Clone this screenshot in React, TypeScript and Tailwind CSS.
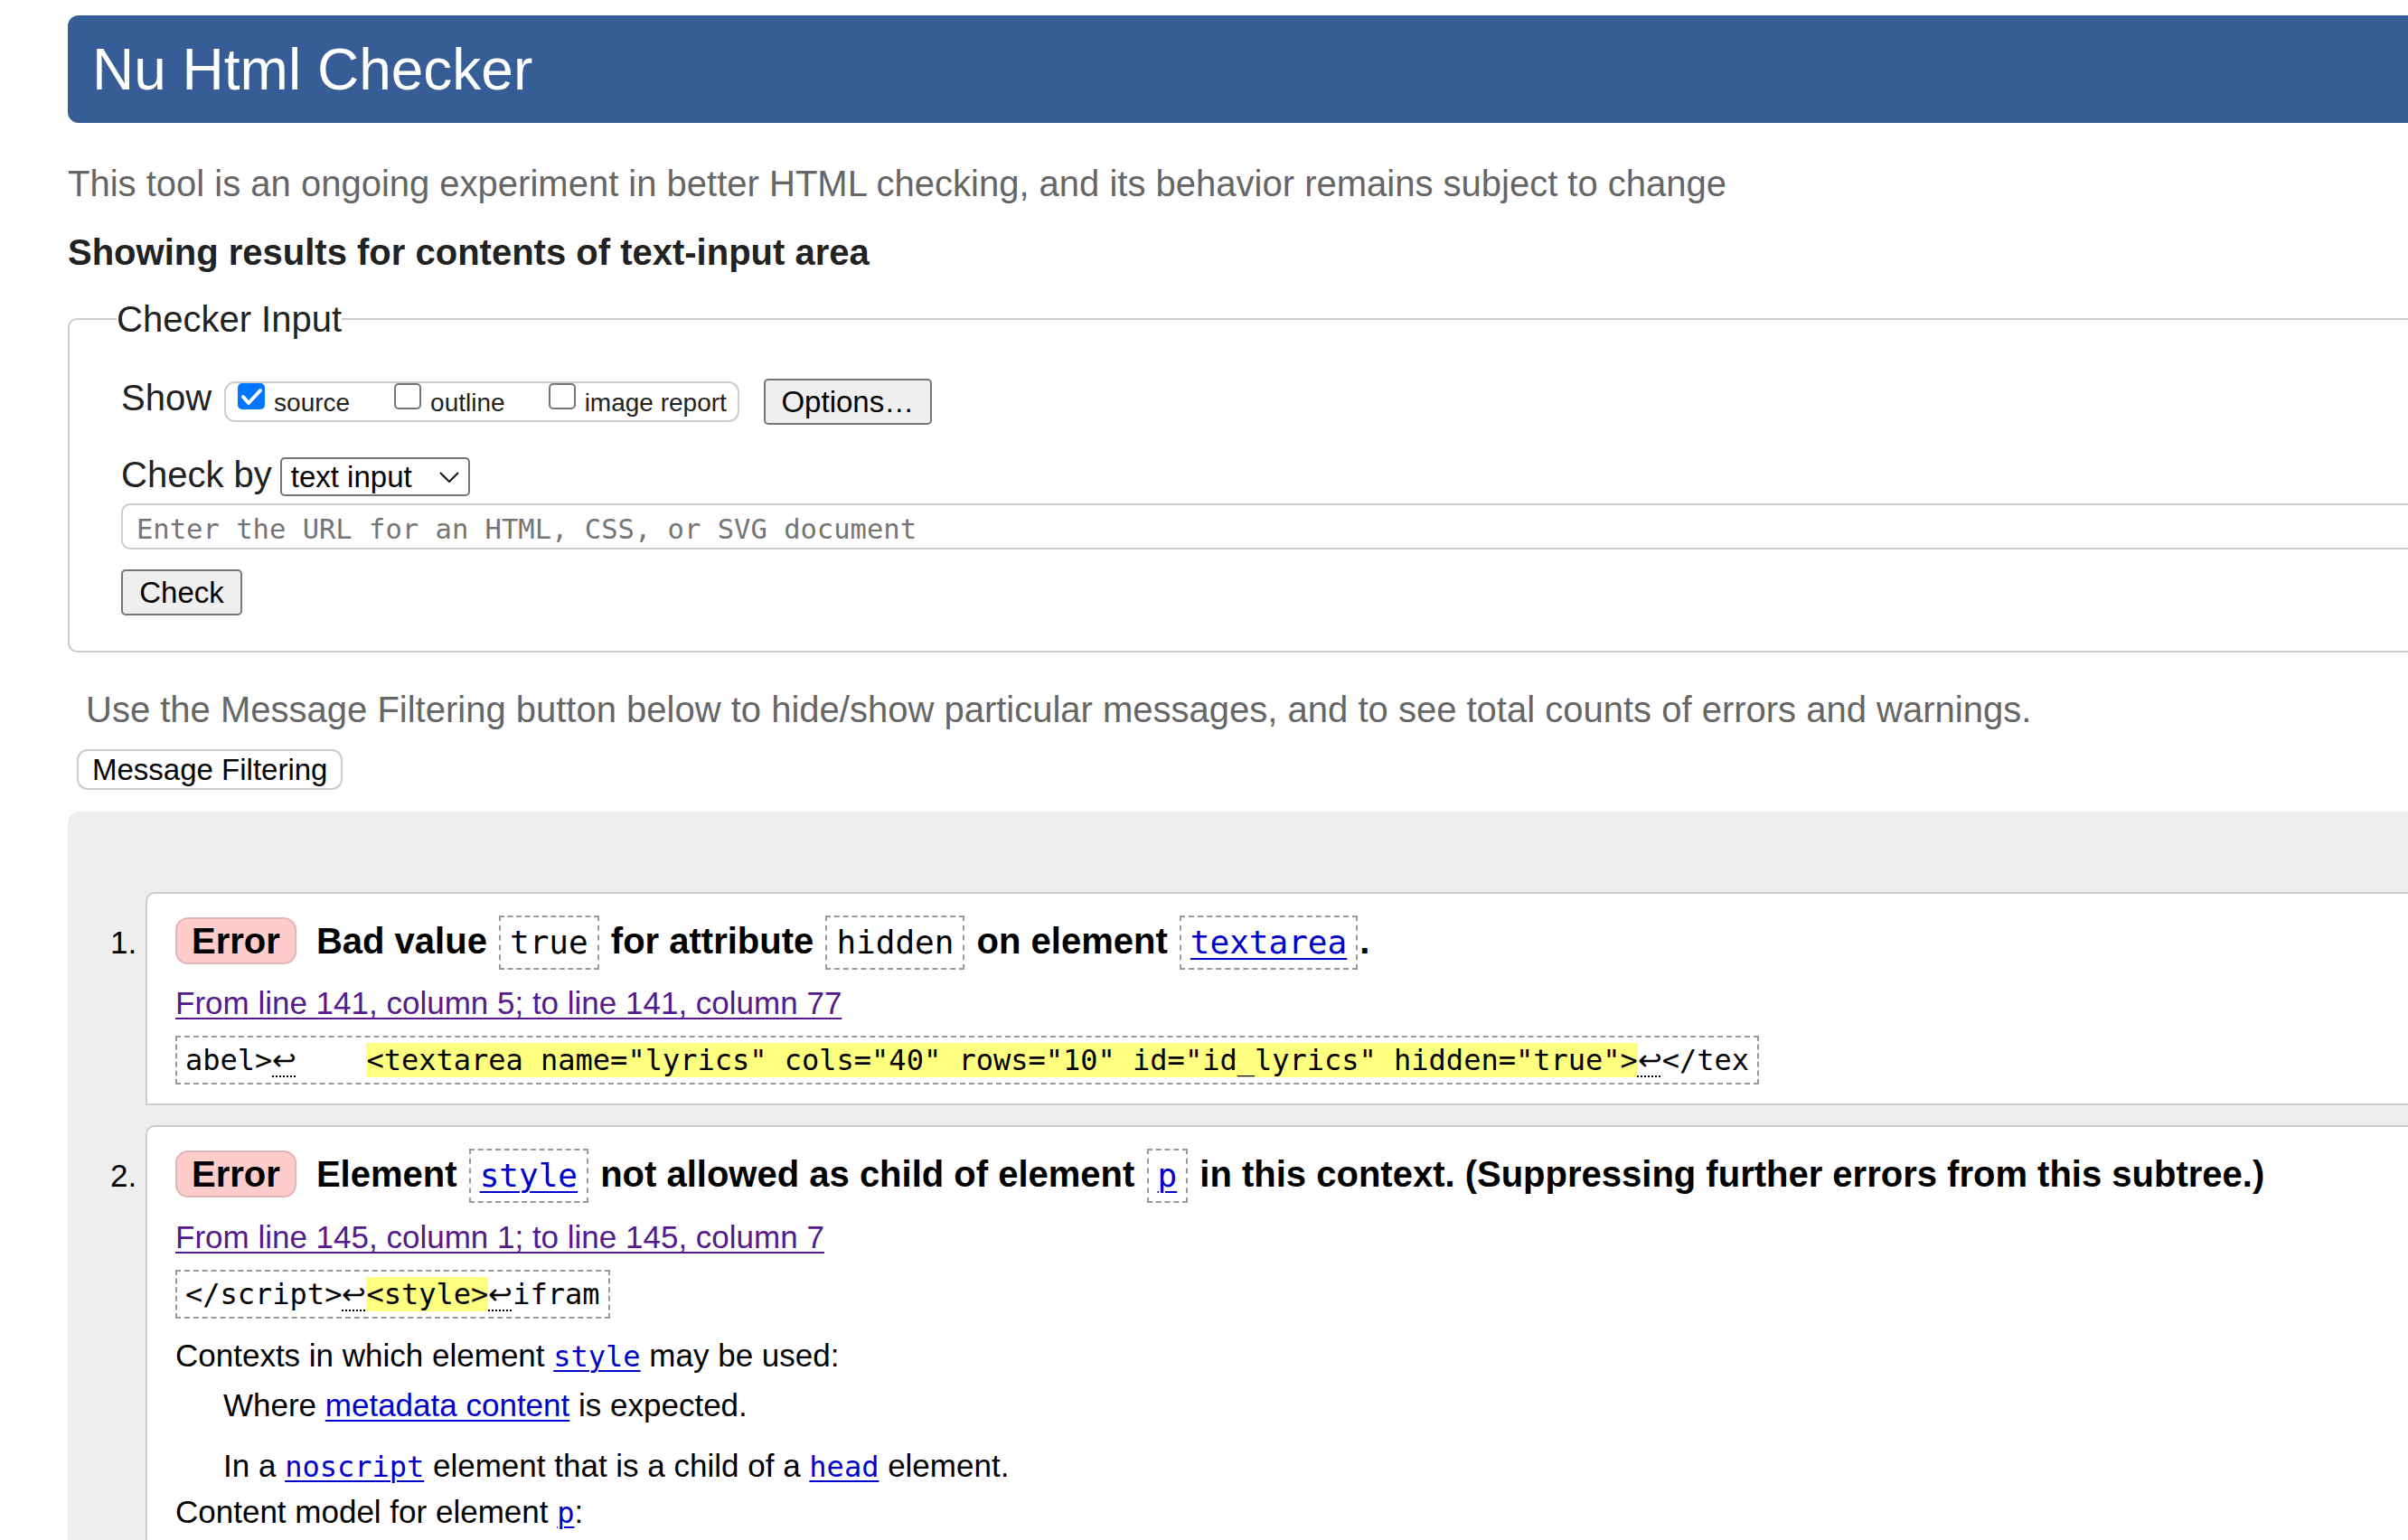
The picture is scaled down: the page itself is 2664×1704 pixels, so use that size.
import React from "react";

const MONO = "font-['DejaVu_Sans_Mono',monospace]";

function Lf() {
  return (
    <span className="font-['DejaVu_Sans',sans-serif] font-light underline decoration-dotted decoration-[1.5px] underline-offset-[6px]">↩</span>
  );
}

function CodeBox({ children }: { children: React.ReactNode }) {
  return (
    <code className="mx-[2px] inline-block border-2 border-dashed border-[#999] px-[10px] font-['DejaVu_Sans_Mono',monospace] text-[36px] font-normal leading-[56px]">
      {children}
    </code>
  );
}

function CodeLink({ children }: { children: React.ReactNode }) {
  return <a className="text-[#0000cc] underline decoration-[2px] underline-offset-[5px]">{children}</a>;
}

function Badge() {
  return (
    <span className="mr-[11px] inline-block rounded-[14px] border-2 border-[#e3b6b6] bg-[#ffcccc] px-[16px] leading-[48px]">
      Error
    </span>
  );
}

function Checkbox({ checked }: { checked?: boolean }) {
  if (checked) {
    return (
      <span className="flex h-[29px] w-[30px] shrink-0 items-center justify-center rounded-[5px] bg-[#0075ff]">
        <svg width="30" height="29" viewBox="0 0 30 29">
          <polyline points="6,15 12,22 25,8" fill="none" stroke="white" strokeWidth="4" strokeLinecap="round" strokeLinejoin="round" />
        </svg>
      </span>
    );
  }
  return <span className="block h-[29px] w-[30px] shrink-0 rounded-[5px] border-[2.5px] border-[#767676] bg-white" />;
}

export default function App() {
  return (
    <div className="h-[1704px] w-[2664px] overflow-hidden bg-white font-['Liberation_Sans',Arial,sans-serif] text-black">
      <div className="w-[2820px] pl-[75px] pt-[17px]">
        {/* Header */}
        <h1 className="flex h-[119px] items-center rounded-l-[12px] bg-[#365d95] pl-[27px] text-[64px] font-normal leading-none text-white">
          Nu Html Checker
        </h1>

        <p className="mt-[44px] text-[40px] leading-[46px] text-[#666]">
          This tool is an ongoing experiment in better HTML checking, and its behavior remains subject to change
        </p>
        <p className="mt-[30px] text-[40px] font-bold leading-[46px] text-[#222]">
          Showing results for contents of text-input area
        </p>

        {/* Checker Input fieldset */}
        <fieldset className="mt-[28px] rounded-[10px] border-2 border-[#cccccc] pb-[39px] pl-[57px] pr-[40px] pt-[42px]">
          <legend className="-ml-[5px] px-0 text-[40px] leading-[46px] text-[#222]">Checker Input</legend>

          <div className="flex h-[52px] items-center">
            <span className="mb-[8px] text-[40px] leading-[46px] text-[#222]">Show</span>
            <div className="ml-[14px] flex h-[45px] rounded-[12px] border-2 border-[#cccccc] pl-[13px] pr-[12px]">
              <label className="flex items-start">
                <Checkbox checked />
                <span className="ml-[10px] mt-[6px] text-[28px] leading-[32px] text-[#222]">source</span>
              </label>
              <label className="ml-[49px] flex items-start">
                <Checkbox />
                <span className="ml-[10px] mt-[6px] text-[28px] leading-[32px] text-[#222]">outline</span>
              </label>
              <label className="ml-[48px] flex items-start">
                <Checkbox />
                <span className="ml-[10px] mt-[6px] text-[28px] leading-[32px] text-[#222]">image report</span>
              </label>
            </div>
            <button className="ml-[27px] flex h-[51px] w-[186px] items-center justify-center rounded-[5px] border-2 border-[#767676] bg-[#efefef] text-[33px] leading-none text-black">
              Options…
            </button>
          </div>

          <div className="mt-[35px] flex h-[45px] items-center">
            <span className="mb-[6px] text-[40px] leading-[46px] text-[#222]">Check by</span>
            <div className="ml-[9px] flex h-[43px] w-[210px] items-center rounded-[5px] border-2 border-[#767676] pl-[10px] pr-[10px]">
              <span className="text-[33px] text-black">text input</span>
              <svg className="ml-auto" width="22" height="12" viewBox="0 0 22 12">
                <polyline points="1,1 11,11 21,1" fill="none" stroke="#111" strokeWidth="2" />
              </svg>
            </div>
          </div>

          <input
            type="text"
            readOnly
            placeholder="Enter the URL for an HTML, CSS, or SVG document"
            className={`mt-[7px] block h-[51px] w-full rounded-[10px] border-2 border-[#cccccc] pl-[15px] pt-[6px] ${MONO} text-[30.5px] outline-none placeholder:text-[#757575]`}
          />

          <button className="mt-[22px] flex h-[51px] w-[134px] items-center justify-center rounded-[5px] border-2 border-[#767676] bg-[#efefef] text-[33px] leading-none text-black">
            Check
          </button>
        </fieldset>

        <p className="ml-[20px] mt-[40px] text-[40px] leading-[46px] text-[#666]">
          Use the Message Filtering button below to hide/show particular messages, and to see total counts of errors and warnings.
        </p>
        <button className="ml-[10px] mt-[21px] flex h-[45px] items-center rounded-[12px] border-2 border-[#cccccc] bg-white px-[15px] text-[33px] leading-none text-black">
          Message Filtering
        </button>

        {/* Results */}
        <div className="mt-[24px] rounded-tl-[12px] bg-[#eeeeee] pb-[200px] pl-[86px] pt-[89px]">
          <ol className="list-decimal">
            <li className="rounded-tl-[10px] border-2 border-[#cccccc] bg-white pb-[21px] pl-[31px] pt-[20px] text-[35px]">
              <p className="text-[40px] font-bold leading-[64px]">
                <Badge /> Bad value <CodeBox>true</CodeBox> for attribute <CodeBox>hidden</CodeBox> on element{" "}
                <CodeBox>
                  <CodeLink>textarea</CodeLink>
                </CodeBox>
                .
              </p>
              <p className="mt-[17px] leading-[40px]">
                <a className="text-[#551a8b] underline decoration-[2px] underline-offset-[4px]">
                  From line 141, column 5; to line 141, column 77
                </a>
              </p>
              <div className={`mt-[16px] w-fit whitespace-pre border-2 border-dashed border-[#999] px-[9px] ${MONO} text-[32px] leading-[50px]`}>
                abel&gt;<Lf />{"    "}
                <b className="bg-[#ffff80] font-normal">{'<textarea name="lyrics" cols="40" rows="10" id="id_lyrics" hidden="true">'}</b>
                <Lf />
                {"</tex"}
              </div>
            </li>

            <li className="mt-[22px] rounded-tl-[10px] border-2 border-[#cccccc] bg-white pb-[80px] pl-[31px] pt-[20px] text-[35px]">
              <p className="text-[40px] font-bold leading-[64px]">
                <Badge /> Element{" "}
                <CodeBox>
                  <CodeLink>style</CodeLink>
                </CodeBox>{" "}
                not allowed as child of element{" "}
                <CodeBox>
                  <CodeLink>p</CodeLink>
                </CodeBox>{" "}
                in this context. (Suppressing further errors from this subtree.)
              </p>
              <p className="mt-[18px] leading-[40px]">
                <a className="text-[#551a8b] underline decoration-[2px] underline-offset-[4px]">
                  From line 145, column 1; to line 145, column 7
                </a>
              </p>
              <div className={`mt-[16px] w-fit whitespace-pre border-2 border-dashed border-[#999] px-[9px] ${MONO} text-[32px] leading-[50px]`}>
                {"</script>"}
                <Lf />
                <b className="bg-[#ffff80] font-normal">{"<style>"}</b>
                <Lf />
                {"ifram"}
              </div>
              <p className="mt-[21px] leading-[40px]">
                Contexts in which element{" "}
                <a className={`text-[#0000cc] underline decoration-[2px] underline-offset-[4px] ${MONO} text-[32px]`}>style</a> may be used:
              </p>
              <p className="mt-[14px] pl-[53px] leading-[40px]">
                Where <a className="text-[#0000cc] underline decoration-[2px] underline-offset-[4px]">metadata content</a> is expected.
              </p>
              <p className="mt-[27px] pl-[53px] leading-[40px]">
                In a{" "}
                <a className={`text-[#0000cc] underline decoration-[2px] underline-offset-[4px] ${MONO} text-[32px]`}>noscript</a>{" "}
                element that is a child of a{" "}
                <a className={`text-[#0000cc] underline decoration-[2px] underline-offset-[4px] ${MONO} text-[32px]`}>head</a> element.
              </p>
              <p className="mt-[10px] leading-[40px]">
                Content model for element{" "}
                <a className={`text-[#0000cc] underline decoration-[2px] underline-offset-[4px] ${MONO} text-[32px]`}>p</a>:
              </p>
            </li>
          </ol>
        </div>
      </div>
    </div>
  );
}
